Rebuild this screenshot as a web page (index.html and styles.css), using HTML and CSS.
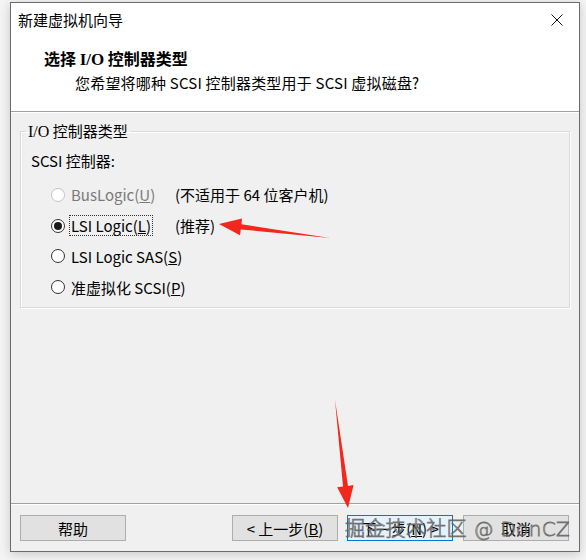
FILE: index.html
```html
<!DOCTYPE html>
<html lang="zh-CN">
<head>
    <meta charset="UTF-8">
    <title>新建虚拟机向导</title>
    <link rel="stylesheet" href="styles.css">
</head>
<body>
    <div class="window">
        <!-- Title bar + header (white area) -->
        <div class="top">
            <div class="titlebar">
                <span class="title">新建虚拟机向导</span>
                <svg class="close" width="12" height="12" viewBox="0 0 12 12">
                    <path d="M0.5 0.5 L11.5 11.5 M11.5 0.5 L0.5 11.5" stroke="#111" stroke-width="1" fill="none"/>
                </svg>
            </div>
            <div class="header">
                <h1>选择 <span class="serif">I/O</span> 控制器类型</h1>
                <p>您希望将哪种 SCSI 控制器类型用于 SCSI 虚拟磁盘?</p>
            </div>
        </div>

        <div class="content">
            <fieldset class="group">
                <legend><span class="serif">I/O</span> 控制器类型</legend>
                <div class="group-label">SCSI 控制器:</div>
                <div class="options">
                    <div class="option disabled">
                        <span class="radio"></span>
                        <span class="label">BusLogic(<u>U</u>)</span>
                        <span class="note">(不适用于 64 位客户机)</span>
                    </div>
                    <div class="option">
                        <span class="radio checked"></span>
                        <span class="label focus">LSI Logic(<u>L</u>)</span>
                        <span class="note">(推荐)</span>
                    </div>
                    <div class="option">
                        <span class="radio"></span>
                        <span class="label">LSI Logic SAS(<u>S</u>)</span>
                    </div>
                    <div class="option">
                        <span class="radio"></span>
                        <span class="label">准虚拟化 SCSI(<u>P</u>)</span>
                    </div>
                </div>
            </fieldset>
        </div>

        <div class="footer">
            <button class="btn">帮助</button>
            <div class="spacer"></div>
            <button class="btn">&lt; 上一步(<u>B</u>)</button>
            <button class="btn primary">下一步(<u>N</u>) &gt;</button>
            <button class="btn">取消</button>
        </div>
    </div>

    <!-- annotation arrows -->
    <svg class="arrows" width="586" height="560" viewBox="0 0 586 560">
        <polygon fill="#f2281d" points="219,224 242,218.5 241.5,224.2 330,238 240.8,229.4 240,235.2"/>
        <polygon fill="#f2281d" points="348,508 353.6,485 348,485.9 335,400 343,486.5 337.2,487.3"/>
    </svg>

    <div class="watermark">掘金技术社区 @ DonCZ</div>
</body>
</html>
```

FILE: styles.css
```css
* {
    margin: 0;
    padding: 0;
    box-sizing: border-box;
}

body {
    width: 586px;
    height: 560px;
    background: #f4f4f4;
    font-family: "Noto Sans CJK SC", "Microsoft YaHei", sans-serif;
    font-size: 15px;
    color: #000;
    position: relative;
    overflow: hidden;
}

.serif {
    font-family: "Liberation Serif", "Noto Sans CJK SC", serif;
}

.window {
    margin: 2px 0 0 10px;
    width: 570px;
    height: 550px;
    border: 1px solid #6b6b6b;
    background: #f0f0f0;
    display: flex;
    flex-direction: column;
    box-shadow: 0 2px 10px rgba(0, 0, 0, 0.18);
}

/* white area */
.top {
    background: #fff;
    height: 109px;
    border-bottom: 1px solid #a0a0a0;
}

.titlebar {
    height: 34px;
    display: flex;
    align-items: center;
    justify-content: space-between;
    padding: 0 16px 0 7px;
}

.title {
    line-height: 20px;
}

.header {
    padding: 10px 0 0 33px;
}

.header h1 {
    font-size: 16px;
    font-weight: 700;
    line-height: 22px;
}

.header h1 .serif {
    font-size: 17px;
}

.header p {
    line-height: 22px;
    margin-top: 1px;
    padding-left: 31px;
    letter-spacing: 0.2px;
}

.content {
    flex: 1;
    padding: 8px 9px 0;
    border-top: 1px solid #fff;
}

.group {
    border: 1px solid #dadada;
    box-shadow: 1px 1px 0 #fff, inset 1px 1px 0 #fff;
    height: 187px;
    padding: 0 10px;
}

.group legend {
    margin-left: -5px;
    padding: 0 2px;
    line-height: 20px;
}

.group legend .serif {
    font-size: 16px;
}

.group-label {
    line-height: 20px;
    margin-top: 9px;
}

.options {
    display: flex;
    flex-direction: column;
    gap: 11px;
    margin-top: 13px;
    padding-left: 20px;
}

.option {
    display: grid;
    grid-template-columns: 14px 98px auto;
    column-gap: 6px;
    align-items: center;
    height: 20px;
}

.radio {
    width: 14px;
    height: 14px;
    border: 1px solid #333;
    border-radius: 50%;
    background: #fff;
    display: flex;
    align-items: center;
    justify-content: center;
}

.radio.checked::after {
    content: '';
    width: 8px;
    height: 8px;
    border-radius: 50%;
    background: #1a1a1a;
}

.label {
    justify-self: start;
    white-space: nowrap;
    line-height: 19px;
    padding: 0 1px;
    margin-left: -1px;
}

.label.focus {
    outline: 1px dotted #333;
    outline-offset: 0;
}

.note {
    white-space: nowrap;
}

.disabled .radio {
    border-color: #c4c4c4;
}

.disabled .label {
    color: #7a7a7a;
}

.footer {
    height: 48px;
    border-top: 1px solid #a0a0a0;
    display: flex;
    align-items: flex-start;
    padding: 11px 10px 0 9px;
    gap: 9px;
    box-shadow: inset 0 1px 0 #fff;
}

.spacer {
    flex: 1;
}

.btn {
    width: 106px;
    height: 26px;
    border: 1px solid #adadad;
    background: #e1e1e1;
    font-family: inherit;
    font-size: 15px;
    color: #000;
    white-space: nowrap;
}

.btn.primary {
    border-color: #0078d7;
    background: #e5f1fb;
    margin-right: 1px;
}

.close {
    display: block;
}

.arrows {
    position: absolute;
    left: 0;
    top: 0;
    pointer-events: none;
}

.watermark {
    position: absolute;
    left: 345px;
    top: 516px;
    font-family: "DejaVu Sans", "Noto Sans CJK SC", sans-serif;
    font-size: 20px;
    font-weight: 300;
    line-height: 26px;
    letter-spacing: 0.3px;
    color: rgba(255, 255, 255, 0.6);
    -webkit-text-stroke: 0.8px rgba(70, 70, 70, 0.75);
    white-space: nowrap;
    pointer-events: none;
}
```
